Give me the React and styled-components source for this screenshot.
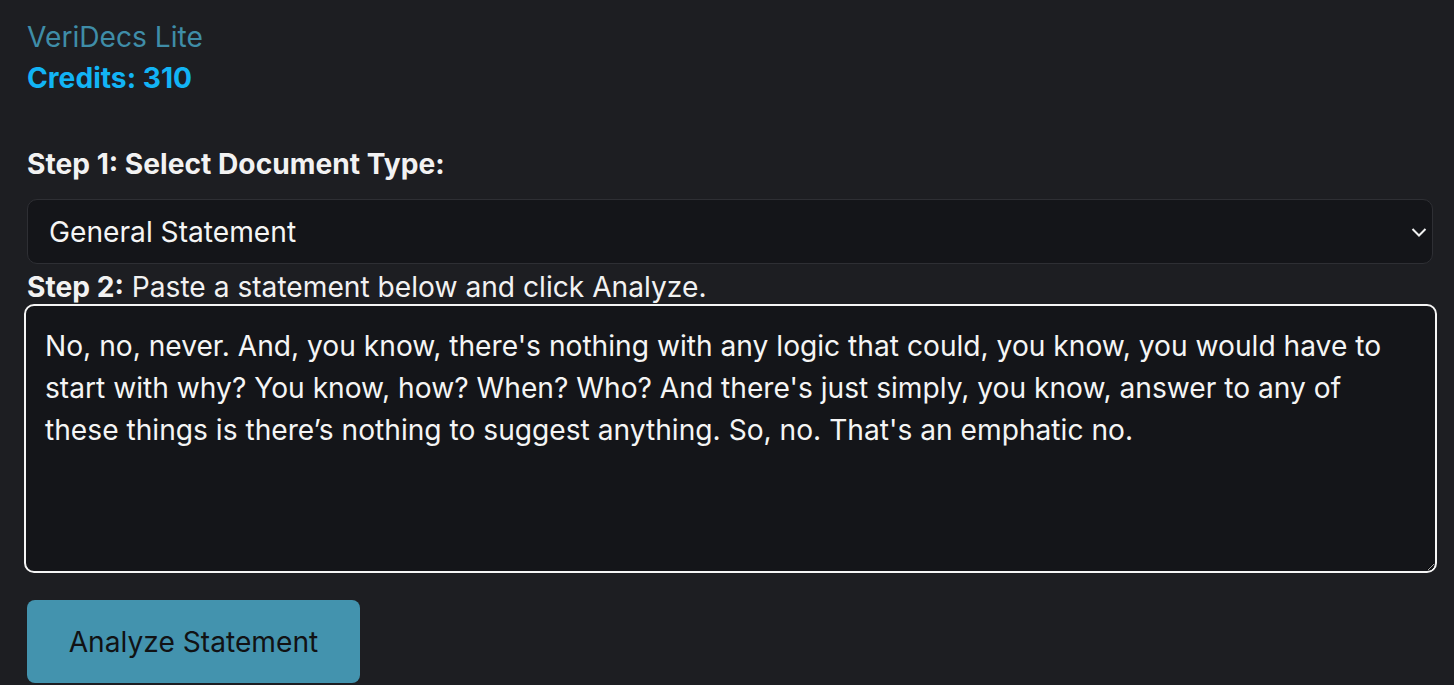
import React from "react";
import styled, { createGlobalStyle } from "styled-components";

const Global = createGlobalStyle`
  html, body { margin: 0; padding: 0; background: #1d1e22; }
  body { font-family: Inter, "Noto Sans", sans-serif; color: #f2f2f2; font-size: 28.16px; }
  * { box-sizing: border-box; }
`;

const Page = styled.div`
  padding: 21px 21px 0 27px;
  display: flex;
  flex-direction: column;
`;

const AppTitle = styled.div`
  font-size: 28.16px;
  line-height: 32px;
  color: #3f8da8;
  font-weight: 400;
`;

const Credits = styled.div`
  margin-top: 8px;
  font-size: 28.16px;
  line-height: 34px;
  font-weight: 700;
  color: #12b4f5;
`;

const StepLabel = styled.div`
  font-size: 28.16px;
  line-height: 30px;
  font-weight: ${(p) => (p.$bold ? 700 : 400)};
  margin-top: ${(p) => p.$mt}px;
  color: #f2f2f2;
  b { font-weight: 700; }
`;

const SelectWrap = styled.div`
  position: relative;
  margin-top: 20px;
`;

const Select = styled.select`
  appearance: none;
  width: 100%;
  height: 65px;
  background: #141519;
  border: 1px solid #2e2f34;
  border-radius: 10px;
  color: #f5f5f5;
  font-family: inherit;
  font-size: 28.16px;
  padding: 0 40px 0 21px;
  outline: none;
`;

const Chevron = styled.svg`
  position: absolute;
  right: 6px;
  top: 28px;
  width: 16px;
  height: 11px;
  pointer-events: none;
`;

const TextArea = styled.textarea`
  margin-top: 2px;
  margin-left: -3px;
  width: calc(100% + 7px);
  height: 269px;
  background: #141519;
  border: 2px solid #f5f5f5;
  border-radius: 10px;
  color: #f5f5f5;
  font-family: inherit;
  font-size: 28.16px;
  line-height: 42px;
  padding: 19px 19px;
  resize: vertical;
  outline: none;
  display: block;
`;

const Button = styled.button`
  margin-top: 27px;
  align-self: flex-start;
  width: 333px;
  height: 83px;
  background: #4393ae;
  border: none;
  border-radius: 8px;
  color: #111214;
  font-family: inherit;
  font-size: 28.16px;
  cursor: pointer;
`;

const text =
  "No, no, never. And, you know, there's nothing with any logic that could, you know, you would have to start with why? You know, how? When? Who? And there's just simply, you know, answer to any of these things is there\u2019s nothing to suggest anything. So, no. That's an emphatic no.";

export default function App() {
  return (
    <>
      <Global />
      <Page>
        <AppTitle>VeriDecs Lite</AppTitle>
        <Credits>Credits: 310</Credits>
        <StepLabel $bold $mt={54}>Step 1: Select Document Type:</StepLabel>
        <SelectWrap>
          <Select defaultValue="general">
            <option value="general">General Statement</option>
          </Select>
          <Chevron viewBox="0 0 16 11">
            <path d="M1.5 2 L8 8.5 L14.5 2" fill="none" stroke="#f0f0f0" strokeWidth="2" />
          </Chevron>
        </SelectWrap>
        <StepLabel $mt={8}>
          <b>Step 2:</b> Paste a statement below and click Analyze.
        </StepLabel>
        <TextArea defaultValue={text} />
        <Button>Analyze Statement</Button>
      </Page>
    </>
  );
}
